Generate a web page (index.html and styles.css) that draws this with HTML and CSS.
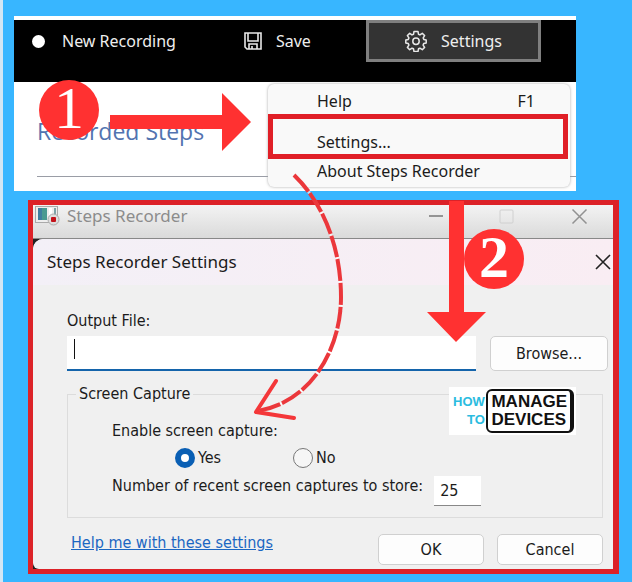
FILE: index.html
```html
<!DOCTYPE html>
<html lang="en">
<head>
<meta charset="utf-8">
<title>Steps Recorder Settings</title>
<link rel="stylesheet" href="styles.css">
</head>
<body>
<main class="page">
  <section class="recorder">
    <div class="toolbar">
      <button class="tool tool-new" type="button"><span class="dot"></span>New Recording</button>
      <button class="tool tool-save" type="button">
        <svg class="icon" viewBox="0 0 18 18" fill="none" stroke="#e8e8e8" stroke-width="1.6"><path d="M1 1h16v16H3L1 15zM4 1v8h10V1M5 17v-5h8v5M8 17v-3"/></svg>Save
      </button>
      <button class="tool tool-settings" type="button">
        <svg class="icon gear" viewBox="0 0 22 22" fill="none" stroke="#e8e8e8" stroke-width="1.500" stroke-linejoin="round"><path d="M9 1.500h4l.5 2.800 1.400.6 2.400-1.600 2.300 2.300-1.400 2.300.6 1.500 2.400.6v3l-2.500.6-.6 1.500 1.500 2.300-2.300 2.300-2.400-1.500-1.400.6-.5 2.700H9l-.5-2.700-1.500-.6-2.300 1.500-2.300-2.300 1.500-2.300-.6-1.500L.8 13v-3l2.500-.6.6-1.500-1.500-2.300 2.300-2.300L7 4.900l1.500-.6z"/><circle cx="11" cy="11.300" r="3.200"/></svg>Settings
      </button>
    </div>
    <div class="steps"><h1>Recorded Steps</h1></div>
    <ul class="menu">
      <li><button type="button"><span>Help</span><span>F1</span></button></li>
      <li class="marked"><button type="button">Settings...</button></li>
      <li><button type="button">About Steps Recorder</button></li>
    </ul>
  </section>

  <section class="window">
    <header class="window-bar">
      <svg class="app-icon" viewBox="0 0 26 20"><rect x=".5" y=".5" width="22" height="16" fill="#eee" stroke="#aaa"/><rect x="3" y="2" width="9" height="12" fill="#4a9a91"/><path d="M3 2h4v12H3z" fill="#3f7fa0"/><path d="M14 2h3v9h-3z" fill="#fff"/><path d="M19 2h2v7h-2z" fill="#7fa3a8"/><circle cx="18.500" cy="13.500" r="5.500" fill="#ddd" stroke="#aaa"/><rect x="16" y="11" width="5" height="5" rx="1" fill="#c4121a"/></svg>
      <span class="window-name">Steps Recorder</span>
      <svg class="caption-icons" viewBox="0 0 160 16" fill="none"><path d="M1 8h14" stroke="#777" stroke-width="1.500"/><rect x="72" y="2" width="13" height="13" rx="1" stroke="#d0d0d0"/><path d="M144.500 1.500l14 14m0-14l-14 14" stroke="#929292" stroke-width="1.500"/></svg>
    </header>
    <form class="dialog">
      <header class="dialog-bar">
        <h2>Steps Recorder Settings</h2>
        <button class="close" type="button" aria-label="Close"><svg viewBox="0 0 16 16"><path d="M1 1l14 14M15 1L1 15" stroke="#222" stroke-width="1.600"/></svg></button>
      </header>
      <div class="dialog-body">
        <label for="output">Output File:</label>
        <div class="file-row">
          <div class="file-box"><span class="caret"></span><input id="output" type="text"></div>
          <button class="btn" type="button">Browse...</button>
        </div>
        <fieldset>
          <legend>Screen Capture</legend>
          <p>Enable screen capture:</p>
          <div class="choices">
            <label><input type="radio" name="capture" checked>Yes</label>
            <label><input type="radio" name="capture">No</label>
          </div>
          <div class="count-row">
            <label for="count">Number of recent screen captures to store:</label>
            <input id="count" type="text" value="25">
          </div>
        </fieldset>
        <footer>
          <a href="#help">Help me with these settings</a>
          <button class="btn" type="button">OK</button>
          <button class="btn" type="button">Cancel</button>
        </footer>
      </div>
    </form>
    <div class="logo">
      <div class="logo-how">HOW<br>TO</div>
      <div class="logo-device">MANAGE<br>DEVICES</div>
    </div>
  </section>

  <svg class="arrows" viewBox="0 0 632 582" fill="none">
    <path d="M110 115h112V93l29 29-29 29v-22H110z" fill="#ff3131"/>
    <path d="M449 201h15v111h22l-30 30-29-30h22z" fill="#ff3131"/>
    <path d="M294 175C325 205 341 250 341 297C341 350 310 403 257 411" stroke="#fff" stroke-opacity=".6" stroke-width="3"/>
    <path d="M294 175C325 205 341 250 341 297C341 350 310 403 257 411" stroke="#eb373b" stroke-width="4" stroke-dasharray="22 2"/>
    <path d="M276 381L256 412L294 418" stroke="#f43739" stroke-linecap="round" stroke-linejoin="round" stroke-width="4"/>
  </svg>
  <span class="badge badge-one">1</span>
  <span class="badge badge-two">2</span>
</main>
</body>
</html>
```
FILE: styles.css
```css
* { box-sizing: border-box; }

body {
  margin: 0;
  background: #38b6ff;
  color: #1b1b1b;
  font: 16px/20px "DejaVu Sans Condensed", "Noto Sans", sans-serif;
}

button, input { font: inherit; color: inherit; }
h1, h2, p, ul { margin: 0; padding: 0; font-weight: 400; }

.page {
  position: relative;
  min-height: 100vh;
  padding: 16px 13px 9px 25px;
  border-left: 3px solid #d3e6f4;
}

/* Recorder window with its drop-down menu */
.recorder {
  position: relative;
  margin: 0 43px 9px -14px;
  padding-top: 4px;
  background: #fff;
  font-family: "Noto Sans", sans-serif;
}

.toolbar {
  display: flex;
  align-items: flex-start;
  height: 62px;
  padding: 0 35px 0 18px;
  background: #000;
}

.tool {
  display: flex;
  align-items: center;
  height: 42px;
  padding: 0;
  border: 0;
  background: none;
  color: #eee;
}

.dot {
  width: 13px;
  height: 13px;
  margin-right: 17px;
  border-radius: 50%;
  background: #fff;
}

.icon { width: 18px; height: 18px; margin-right: 14px; }
.gear { width: 22px; height: 22px; }
.tool-save { margin-left: 68px; }

.tool-settings {
  justify-content: center;
  width: 175px;
  margin-left: auto;
  border: 3px solid #7f7f7f;
  background: #333;
}

.steps { padding: 33px 0 14px 23px; }

.steps h1 {
  padding-bottom: 29px;
  border-bottom: 1px solid #9a9da6;
  color: #5273b0;
  font-family: "Open Sans", sans-serif;
  font-size: 23px;
  line-height: 32px;
}

.menu {
  position: absolute;
  top: 68px;
  right: 6px;
  width: 302px;
  padding: 2px 2px 4px 0;
  border-radius: 6px;
  background: #f9f9f9;
  box-shadow: 0 0 3px #aaa;
  list-style: none;
}

.menu button {
  display: flex;
  justify-content: space-between;
  width: 100%;
  padding: 5px 33px 0 49px;
  border: 0;
  background: none;
}

.menu li { height: 28px; }
.menu .marked { height: 45px; border: 5px solid #e01f27; }
.menu .marked button { padding: 13px 0 0 44px; }
.menu li:last-child { height: 24px; }
.menu li:last-child button { padding-top: 2px; }

/* Settings dialog in front of its parent window */
.window {
  position: relative;
  border: 5px solid #dc2228;
  border-right-width: 6px;
  background: #222;
}

.window-bar {
  display: flex;
  align-items: center;
  height: 34px;
  padding: 0 25px 12px 2px;
  border-bottom: 1px solid #888;
  background: linear-gradient(#f3f3f3, #dadada);
  color: #8c8c8c;
  font: 17px/22px "Noto Sans", sans-serif;
}

.app-icon { width: 26px; height: 20px; margin-right: 6px; }
.caption-icons { width: 160px; height: 16px; margin-left: auto; }

.dialog {
  border-radius: 10px 0 0 6px;
  background: #f0f0f0;
}

.dialog-bar {
  display: flex;
  align-items: center;
  justify-content: space-between;
  height: 46px;
  padding: 0 2px 0 14px;
  border-radius: 10px 0 0 0;
  background: linear-gradient(90deg, #f3f0f7, #f9edf3);
}

.dialog-bar h2 { font: 17px/22px "Noto Sans", sans-serif; }
.close { padding: 0; border: 0; background: none; }
.close svg { display: block; width: 16px; height: 16px; }

.dialog-body { padding: 26px 5px 4px 34px; }
.dialog-body > label { display: block; }

.file-row { display: flex; gap: 14px; height: 35px; margin-top: 5px; }

.file-box {
  display: flex;
  flex: 1;
  align-items: flex-start;
  padding: 3px 7px;
  border-bottom: 2px solid #1464ab;
  background: #fff;
}

.file-box input {
  flex: 1;
  min-width: 0;
  border: 0;
  outline: 0;
  background: none;
}

.caret { width: 1px; height: 20px; background: #111; }

.btn {
  width: 106px;
  padding: 0;
  border: 1px solid #d0d0d0;
  border-radius: 5px;
  background: #fdfdfd;
}

.file-row .btn { width: 118px; }

fieldset {
  margin: 13px 5px 0 0;
  padding: 17px 10px 11px 44px;
  border: 1px solid #dcdcdc;
}

legend { margin-left: -36px; padding: 0 3px; }

.choices { display: flex; gap: 72px; padding: 7px 0 8px 63px; }
.choices label { display: flex; align-items: center; gap: 3px; }

.choices input {
  width: 20px;
  height: 20px;
  margin: 0;
  border: 1px solid #777;
  border-radius: 50%;
  background: #f6f6f6;
  appearance: none;
}

.choices input:checked { border: 6px solid #0a5fb4; background: #fff; }

.count-row { display: flex; align-items: flex-start; gap: 11px; }

.count-row input {
  width: 47px;
  height: 30px;
  padding: 0 6px;
  border: 0;
  border-bottom: 1px solid #888;
  background: #fff;
}

footer {
  display: flex;
  gap: 13px;
  height: 31px;
  margin: 16px 5px 0 4px;
}

footer a { margin: -1px auto 0 0; color: #1a66c2; }

.logo {
  position: absolute;
  top: 182px;
  right: 37px;
  display: flex;
  align-items: center;
  justify-content: space-between;
  width: 127px;
  height: 48px;
  padding: 0 2px 0 4px;
  background: #fff;
  white-space: nowrap;
}

.logo-how {
  color: #2bbce0;
  font: 700 13px/18px "Liberation Sans", sans-serif;
  text-align: right;
}

.logo-device {
  padding: 2px 3px;
  border: 2px solid #111;
  border-right-width: 4px;
  border-radius: 6px;
  color: #111;
  font: 700 17px/18px "Liberation Sans", sans-serif;
}

/* Callouts drawn over both windows */
.arrows {
  position: absolute;
  top: 0;
  left: -3px;
  width: 632px;
  height: 582px;
  pointer-events: none;
}

.badge {
  position: absolute;
  width: 60px;
  height: 60px;
  border-radius: 50%;
  background: #ff3131;
  color: #fff;
  font: 60px/56px "Liberation Serif", serif;
  text-align: center;
}

.badge-one { top: 80px; left: 36px; }
.badge-two { top: 229px; left: 461px; font-weight: 700; }
```
